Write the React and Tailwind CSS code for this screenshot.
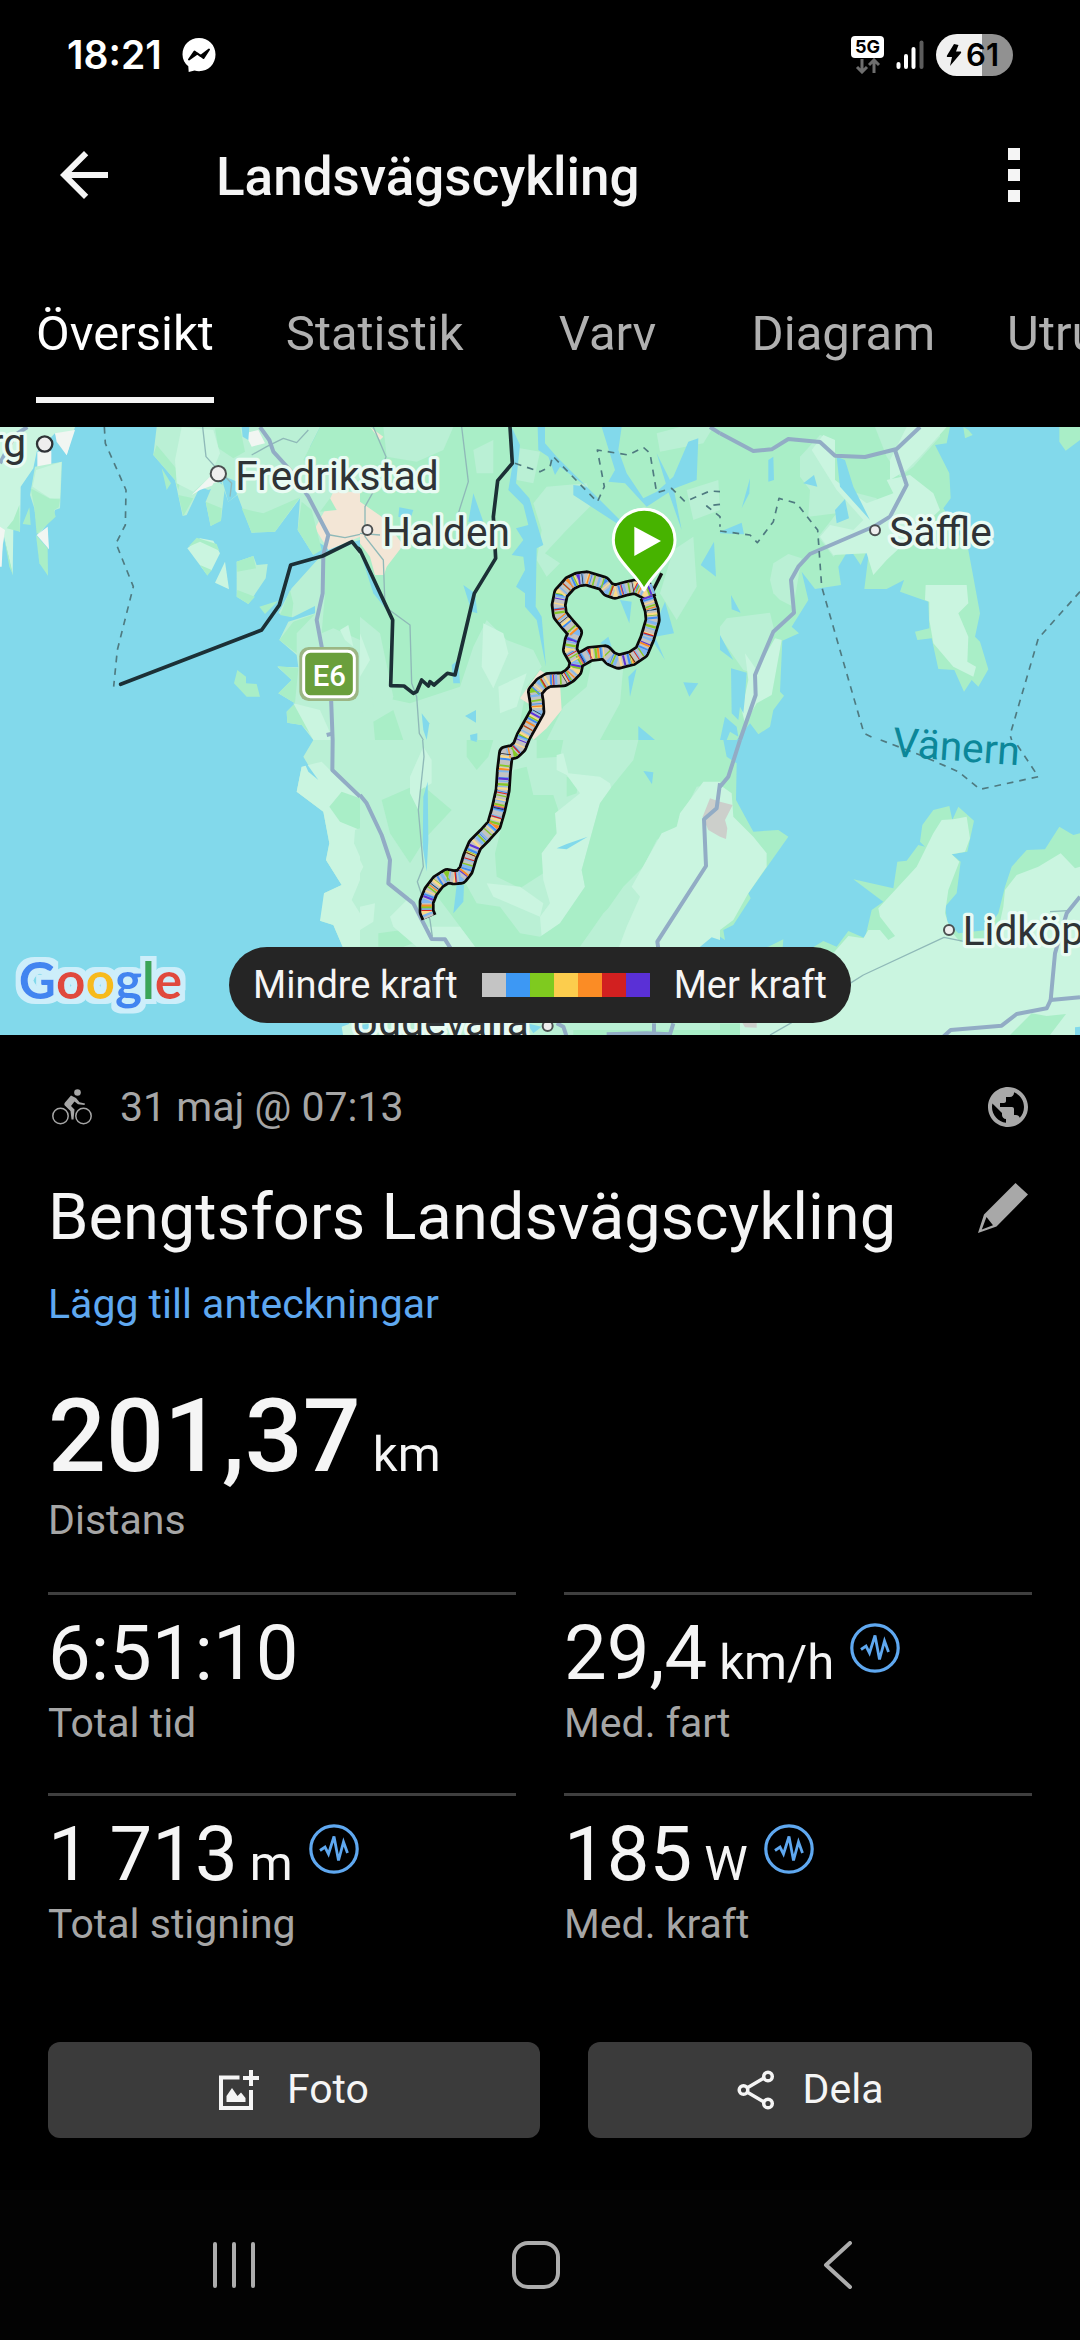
import { useState } from 'react';

const tabs = ['Översikt', 'Statistik', 'Varv', 'Diagram', 'Utrustning'];

const stats = [
  { value: '6:51:10', label: 'Total tid' },
  { value: '29,4', unit: 'km/h', label: 'Med. fart', graph: true },
  { value: '1 713', unit: 'm', label: 'Total stigning', graph: true },
  { value: '185', unit: 'W', label: 'Med. kraft', graph: true },
];

const WATER = '#82d9eb';
const FOREST = '#a9eec7';
const LAND = '#baf0d5';
const PLAIN = '#caf5e0';
const TOWN = '#f3e6d6';
const SAND = '#f1f6f2';
const GREY = '#cccfcb';

// Every tile is 1080 units wide, areas are painted in order
const tiles = [
  {
    id: 'nw',
    x: 0,
    y: -21,
    areas: [
      [PLAIN, '0,21 225,21 200,106 165,40 110,95 100,145 62,200 60,335 40,325 38,465 12,350 0,440'],
      [FOREST, '20,325 60,335 58,255 40,300'],
      [SAND, '165,40 225,30 200,106 170,65'],
      [SAND, '112,95 154,92 154,140 112,145'],
      [SAND, '0,320 15,330 8,375 5,440 0,440'],
      [LAND, '105,140 186,125 180,265 165,270 160,290 115,345 103,265 90,225'],
      [PLAIN, '108,150 184,126 180,235 150,235 98,200'],
      [FOREST, '92,205 150,236 180,238 176,262 162,270 167,290 110,343 103,262'],
      [FOREST, '68,312 88,262 92,315'],
      [FOREST, '108,345 143,385 144,467 118,430'],
      [FOREST, '12,350 40,467 28,440'],
      [SAND, '110,345 143,320 147,388'],
      [LAND, '470,21 960,21 930,80 945,130 1000,150 1080,120 1080,360 985,385 960,370 940,405 893,330 900,235 825,335 755,338 712,225 685,245 662,180 650,200 625,210 600,200 560,285 548,288 525,180 460,105'],
      [FOREST, '470,75 545,165 535,210 525,180 460,105'],
      [FOREST, '535,225 580,235 550,288'],
      [FOREST, '645,25 720,21 735,95 700,115 655,85'],
      [FOREST, '725,265 790,280 900,232 825,335 755,338'],
      [PLAIN, '545,21 640,30 660,100 630,170 580,215 530,190 525,120'],
      [SAND, '575,225 640,160 655,190 600,210'],
      [SAND, '735,40 775,30 795,70 755,80'],
      [LAND, '655,185 675,200 663,300 632,318 617,245 640,190'],
      [FOREST, '617,245 665,265 663,303 632,318'],
      [WATER, '662,165 712,185 710,225 685,245'],
      [FOREST, '485,145 513,190 500,210'],
      [WATER, '725,21 748,21 745,60 728,50'],
      [FOREST, '930,80 960,21 1080,21 1080,130 1000,160 910,120'],
      [TOWN, '1000,215 1080,215 1080,350 985,390 945,325 975,270'],
      [FOREST, '960,275 990,235 1010,270'],
      [FOREST, '905,245 935,270 965,390 940,405 893,330'],
      [PLAIN, '562,385 600,355 640,362 660,400 635,450 620,463'],
      [FOREST, '565,380 590,353 650,372 658,392 600,365'],
      [FOREST, '600,435 635,450 622,467'],
      [PLAIN, '675,425 687,508 645,488'],
      [LAND, '710,425 760,408 770,435 803,432 797,475 745,552 710,530'],
      [FOREST, '710,425 760,408 768,445 712,455'],
      [FOREST, '712,510 765,530 745,552 710,530'],
      [LAND, '1056,375 1080,400 1080,960 940,960 905,915 862,908 860,875 885,850 835,820 875,780 832,740 895,742 890,705 838,660 865,605 945,580 945,558 878,592 835,580 875,505 965,405'],
      [FOREST, '970,410 1056,372 1080,410 1080,660 1000,625 965,640 975,520'],
      [FOREST, '778,560 835,542 795,582'],
      [FOREST, '870,510 880,550 875,592 840,585'],
      [FOREST, '838,660 880,605 945,582 890,640 890,700'],
      [FOREST, '832,738 895,745 885,850 835,820 875,780'],
      [FOREST, '860,875 885,850 950,960 905,915 862,908'],
      [PLAIN, '880,850 960,870 1000,960 940,960'],
      [PLAIN, '1020,630 1045,615 1060,680 1035,660'],
      [FOREST, '712,750 738,770 738,790 770,792 780,830 740,830 702,790'],
    ],
    minor: ['608,21 618,110 650,145 695,190 690,230', '755,105 800,80 850,55 890,68 925,30', '990,345 1035,353 1080,343'],
    roads: ['0,130 45,45 82,21', '780,21 808,60 820,95 870,150 925,230 985,345 970,405 968,520 950,600 965,680 993,830 998,960', '980,945 1000,940'],
    dashed: ['313,21 316,70 378,210 376,315 348,370 400,500 352,690 341,800'],
    border: ['362,793 785,630 838,555 872,435 968,408 1056,365 1080,395'],
  },
  {
    id: 'n',
    x: 1080,
    y: -21,
    areas: [
      [FOREST, '0,21 1080,21 1080,960 0,960'],
      [LAND, '70,21 280,21 250,90 170,125 80,110'],
      [LAND, '455,80 540,95 520,190 470,180'],
      [LAND, '560,200 680,190 700,250 620,330 555,400 600,430 560,470 530,420 545,330 520,250'],
      [LAND, '890,40 960,21 1060,21 1030,70 900,95'],
      [LAND, '980,210 1075,180 1080,270 1000,300'],
      [LAND, '340,90 400,60 400,160 350,160'],
      [LAND, '0,590 60,640 100,830 60,960 0,960'],
      [LAND, '60,830 150,850 300,800 340,680 380,600 440,660 520,690 545,740 500,800 470,960 60,960'],
      [FOREST, '40,905 100,870 130,960 45,960'],
      [LAND, '610,860 680,800 700,700 790,740 780,850 720,960 560,960'],
      [PLAIN, '370,610 430,640 445,700 400,805 365,740'],
      [PLAIN, '0,640 30,720 0,770'],
      [PLAIN, '415,800 500,760 470,860 420,880'],
      [LAND, '940,390 1000,350 1010,500 950,600 900,520'],
      [TOWN, '0,245 65,290 130,375 80,440 72,465 45,465 30,410 0,370'],
      [TOWN, '480,835 540,750 600,790 605,870 560,925 520,960 500,910 520,860'],
      [TOWN, '30,21 70,50 60,60'],
      [WATER, '118,262 160,270 150,300 115,290'],
      [WATER, '340,220 370,305 325,305'],
      [WATER, '455,21 480,75 468,190 508,235 550,375 530,385 527,560 545,590 558,740 530,600 495,560 495,520 468,500 495,450 490,410 455,405 490,360 468,325 505,315 490,255 445,210 460,120'],
      [WATER, '533,21 555,21 555,70 590,110 720,240 780,300 770,310 640,225 640,195 680,200 600,140 585,165 565,110 535,90'],
      [WATER, '725,21 785,21 775,90 800,160 850,235 890,215 940,170 985,65 1015,55 1010,180 945,205 860,260 795,190 745,185 765,150'],
      [WATER, '890,100 940,200 965,330 925,215'],
      [WATER, '310,495 345,520 352,580 335,575'],
      [WATER, '275,735 295,720 300,790 280,790'],
      [WATER, '0,395 50,500 80,570 40,520'],
      [WATER, '780,540 815,545 808,610'],
      [WATER, '915,545 942,640 885,650 915,720 870,650'],
      [WATER, '1022,435 1062,365 1068,470'],
      [WATER, '970,787 1015,790 988,830'],
      [WATER, '720,670 745,650 755,680'],
      [WATER, '830,745 810,830 805,770'],
      [WATER, '185,880 208,910 200,960 190,930'],
      [WATER, '315,888 348,870 348,908'],
      [WATER, '330,945 352,940 352,960 332,960'],
      [WATER, '835,918 885,960 835,960'],
      [LAND, '0,810 30,790 40,860 0,880'],
    ],
    minor: ['40,21 78,110 40,215 15,260 15,350 70,420 75,560 150,615 155,790 170,830 178,940 190,960', '305,21 325,185 295,280', '0,340 60,345'],
    roads: ['1050,21 1080,40'],
    dashed: ['465,130 540,155 570,140 578,108 712,246 733,200 712,90 805,105 850,82 870,100 890,218 935,205 975,245 1050,213 1080,215', '1080,253 1040,258 1080,290 1080,320'],
    border: ['-5,385 0,390 98,600 92,797 132,798 160,820 170,815 185,780 205,798 210,785 222,795 262,760 285,765 343,520 407,415 400,290 413,182 457,130 450,21'],
  },
  {
    id: 'ne',
    x: 2160,
    y: -21,
    areas: [
      [WATER, '0,21 1080,21 1080,960 0,960'],
      [FOREST, '0,21 690,21 680,70 645,75 688,160 692,235 670,265 745,390 780,580 765,650 780,665 805,748 775,800 755,780 732,815 703,750 655,747 635,655 592,660 585,635 628,625 625,545 540,515 552,480 500,507 433,507 450,370 422,435 388,385 355,440 363,495 285,507 245,455 265,540 215,620 237,640 187,662 180,815 192,827 160,870 150,920 115,943 90,910 50,960 0,960'],
      [FOREST, '1018,21 1080,21 1080,60 1037,92 1018,65'],
      [FOREST, '730,21 745,30 758,45 735,55'],
      [LAND, '240,110 300,45 345,60 345,180 375,210 470,235 470,300 340,410 295,350 350,280 265,290 270,210 240,170'],
      [PLAIN, '275,90 310,45 345,60 345,180 440,250 520,220 500,180 570,165 640,220 660,270 500,420 460,465 440,400 340,405 300,350 330,315 400,330 430,300 350,210'],
      [LAND, '465,21 660,21 660,50 580,140 540,170 500,110'],
      [PLAIN, '560,21 680,21 600,110 560,150 510,180 510,120'],
      [LAND, '150,480 160,430 205,402 245,415 220,560 180,540 160,520'],
      [LAND, '0,620 20,595 150,578 165,640 100,760 70,750 0,650'],
      [PLAIN, '75,700 110,750 165,655 185,660 155,825 110,850 75,910 65,870 85,780'],
      [PLAIN, '617,495 740,495 745,550 715,580 745,650 742,725 768,740 760,770 700,740 640,670 628,600 628,545 615,540'],
      [WATER, '145,120 160,110 162,180 145,185'],
      [WATER, '90,175 88,220 65,265'],
      [WATER, '250,190 282,165 292,200'],
      [WATER, '350,110 375,120 400,200 450,300 360,200'],
      [WATER, '345,270 375,237 387,295 350,310'],
      [WATER, '0,335 65,308 72,343 0,340'],
      [WATER, '33,525 62,578 35,568'],
      [WATER, '33,745 80,758 75,830 70,880 60,860 55,900 35,880'],
      [WATER, '0,645 40,720 0,690'],
      [WATER, '15,890 50,920 55,950 30,935 20,960 0,960'],
    ],
    minor: [],
    roads: ['0,40 100,93 155,88 205,57 300,66 345,107 435,111 530,87 600,21', '525,90 560,195 510,290 465,318 270,402 235,440 213,480 222,578 160,635 105,765 107,825 60,960'],
    dashed: ['0,333 90,345 112,368 160,305 177,235 230,250 293,330 305,500 432,940 470,958', '1080,515 955,655 870,945 875,960'],
    border: [],
  },
  {
    id: 'sw',
    x: 0,
    y: 939,
    areas: [
      [LAND, '940,0 1080,0 1080,900 1100,900 1050,885 1028,620 1000,555 960,542 970,520 972,460 1025,435 978,360 988,310 970,215 890,155 905,80 950,118 910,50'],
      [PLAIN, '905,80 965,65 1010,110 1080,170 1080,620 1028,620 1000,555 960,542 972,460 1025,435 978,360 988,310 970,215 890,155'],
      [FOREST, '1025,155 1080,175 1080,270 1020,245 988,200'],
      [LAND, '1065,270 1080,265 1080,350 1062,310'],
      [LAND, '1055,480 1080,420 1080,520'],
      [WATER, '905,50 955,120 925,95'],
      [PLAIN, '1025,860 1080,840 1080,890 1030,890'],
    ],
    minor: [],
    roads: ['998,0 997,90 1080,170'],
    dashed: [],
    border: [],
  },
  {
    id: 's',
    x: 1080,
    y: 939,
    areas: [
      [LAND, '0,0 1080,0 1080,900 0,900'],
      [FOREST, '320,0 400,0 385,50 350,90 320,50'],
      [FOREST, '530,0 610,0 600,50 530,55'],
      [FOREST, '460,90 500,80 520,165 580,165 615,270 550,340 550,400 480,445 410,410 405,340 440,200'],
      [FOREST, '620,110 655,120 650,160 620,170'],
      [FOREST, '65,180 180,130 275,210 200,290 150,370 90,280'],
      [FOREST, '55,580 165,565 160,610 130,620 55,620'],
      [PLAIN, '150,110 190,20 215,60 215,130 180,150 175,210 150,160'],
      [PLAIN, '590,45 610,40 625,100 720,110 750,130 755,150 720,190 665,390 675,440 600,550 545,590 540,530 570,490 550,420 545,340 590,280 585,220 660,160 620,105 590,90'],
      [PLAIN, '380,430 480,440 550,490 540,530 400,470'],
      [FOREST, '835,0 1080,0 1080,130 1010,140 950,260 890,300 850,380 790,440 720,540 660,620 345,620 270,520 210,440 300,400 350,490 420,500 480,580 540,590 600,550 675,440 665,390 720,190 755,140 820,60'],
      [LAND, '810,440 840,465 790,550 765,630 660,620 730,520'],
      [PLAIN, '1080,125 1030,125 960,220 950,260 905,280 860,360 815,440 840,470 800,560 770,640 900,640 1080,640'],
      [PLAIN, '0,360 10,380 0,400'],
      [PLAIN, '100,560 90,530 150,470 190,560 300,560 345,620 170,620'],
      [PLAIN, '0,500 45,490 40,545 0,570'],
      [GREY, '1050,175 1080,185 1080,290 1045,270 1028,230'],
      [WATER, '203,125 205,300 200,395 188,320 190,170'],
      [WATER, '290,435 312,435 310,485 280,520'],
      [WATER, '590,325 620,312 683,290 620,328'],
      [WATER, '850,93 880,97 876,133'],
      [WATER, '1015,625 1055,592 1080,600 1080,625'],
      [WATER, '330,0 350,0 350,6'],
      [FOREST, '640,870 1080,870 1080,900 640,900'],
      [WATER, '0,855 40,850 30,885 10,885'],
      [WATER, '500,850 545,860 520,880'],
    ],
    minor: ['188,0 192,50 175,210 190,380 172,425 210,540 217,590'],
    roads: ['0,165 20,190 65,285 90,360 85,430 160,490 215,597 255,598 275,630', '1080,130 1070,205 1032,238 1038,378 892,605 897,640', '590,850 610,860 620,890', '740,883 860,880 930,883 940,850', '882,850 882,885'],
    dashed: [],
    border: [],
  },
  {
    id: 'se',
    x: 2160,
    y: 939,
    areas: [
      [WATER, '0,0 1080,0 1080,900 0,900'],
      [FOREST, '0,0 10,0 20,50 50,70 48,180 100,275 175,270 205,290 85,460 92,475 40,555 10,570 15,600 0,590'],
      [PLAIN, '0,135 35,160 40,230 100,290 140,340 140,380 85,460 40,540 0,570'],
      [GREY, '0,185 38,195 15,240 22,265 18,297 0,290'],
      [FOREST, '0,640 145,620 190,598 188,625 250,640 310,603 350,620 385,573 435,595 455,510 490,485 400,418 520,445 532,365 560,362 595,315 615,320 600,305 607,255 640,210 688,198 697,240 715,200 762,242 742,335 695,343 722,365 710,460 675,500 682,545 715,580 800,570 835,520 855,440 875,380 920,330 975,328 1018,260 1060,285 1080,280 1080,900 0,900'],
      [PLAIN, '0,660 330,650 385,588 430,595 445,570 480,570 505,600 525,588 480,530 475,505 590,380 640,280 665,240 700,238 740,230 750,295 735,335 695,343 718,365 685,450 675,520 690,570 720,605 830,590 850,500 855,450 890,405 955,380 1022,340 1065,385 1080,380 1080,900 0,900'],
      [FOREST, '870,885 935,820 980,828 1038,822 990,885'],
      [FOREST, '0,850 60,850 60,900 0,900'],
      [GREY, '65,845 110,845 110,863 75,862'],
      [WATER, '1065,862 1080,860 1080,885 1065,885'],
    ],
    minor: ['390,730 430,705 672,592 735,605', '150,885 215,848', '990,515 1045,512'],
    roads: ['60,0 25,110 0,140', '1080,470 1040,520 1005,640 992,780 1080,772', '992,780 980,805 890,822 845,857 692,870 670,890'],
    dashed: ['482,0 600,45 715,95 780,148 955,110 885,5'],
    border: [],
  },
];

const route =
  'M880 505L855 515L825 500L800 505L765 515L745 508L730 490L680 475L655 478L630 490L603 520L596 555L600 585L622 612L645 638L635 662L630 690L650 725L690 702L735 697L752 715L775 725L815 715L845 695L862 655L878 600L875 570L862 530M650 725L645 750L630 766L610 778L565 780L545 792L525 815L530 845L532 875L490 950L478 980L462 995L438 1000L432 1050L428 1110L415 1170L402 1215L375 1245L345 1275L330 1310L318 1350L302 1370L282 1372L262 1368L235 1385L212 1415L200 1445L200 1475L207 1492';

const routeColors = [
  { color: '#7fb7ef', dash: '7 25 4 13 9 31' },
  { color: '#3f8df2', dash: '0 11 5 37 3 49 6 41' },
  { color: '#86c928', dash: '0 13 7 29 4 23 5 37' },
  { color: '#fbd98a', dash: '0 22 7 29 4 33' },
  { color: '#f98c28', dash: '0 41 4 53 6 67' },
  { color: '#d32323', dash: '0 57 3 71 4 93' },
  { color: '#5c33d8', dash: '0 9 6 83 3 129' },
  { color: '#222', dash: '0 66 2 97' },
];

const legend = ['bg-[#c4c4c4]', 'bg-[#3d98f4]', 'bg-[#7fca1f]', 'bg-[#fccd4d]', 'bg-[#fb8c25]', 'bg-[#d22020]', 'bg-[#5a30d6]'];

const cities = [
  { name: 'Fredrikstad', x: 706, y: 188, cx: 655, cy: 140, r: 23 },
  { name: 'Halden', x: 1146, y: 356, cx: 1102, cy: 309, r: 15 },
  { name: 'Säffle', x: 2668, y: 358, cx: 2625, cy: 310, r: 15 },
  { name: 'Lidköping', x: 2888, y: 1555, cx: 2847, cy: 1509, r: 15 },
  { name: 'Uddevalla', x: 1056, y: 1826, cx: 1643, cy: 1797, r: 15 },
];

function Lines({ lines, ...props }) {
  return lines.map((points) => <polyline key={points} points={points} fill="none" strokeLinejoin="round" {...props} />);
}

function RouteMap() {
  return (
    <svg viewBox="0 0 3240 1824" className="block w-full" role="img" aria-label="Karta">
      <defs>
        <filter id="halo" x="-20%" y="-20%" width="140%" height="140%">
          <feMorphology in="SourceAlpha" operator="dilate" radius="15" result="grown" />
          <feFlood floodColor="#cdeefa" />
          <feComposite in2="grown" operator="in" result="edge" />
          <feMerge>
            <feMergeNode in="edge" />
            <feMergeNode in="SourceGraphic" />
          </feMerge>
        </filter>
      </defs>
      <rect width="3240" height="1824" fill={WATER} />
      {tiles.map((tile) => (
        <g key={tile.id} transform={`translate(${tile.x} ${tile.y})`}>
          {tile.areas.map(([fill, points], i) => (
            <polygon key={i} points={points} fill={fill} />
          ))}
          <Lines lines={tile.minor} stroke="#8fb9b8" strokeWidth="4" />
        </g>
      ))}
      {tiles.map((tile) => (
        <g key={tile.id} transform={`translate(${tile.x} ${tile.y})`}>
          <Lines lines={tile.roads} stroke="#92acc5" strokeWidth="12" />
          <Lines lines={tile.dashed} stroke="#4f7a80" strokeWidth="5" strokeDasharray="20 18" />
          <Lines lines={tile.border} stroke="#1c3036" strokeWidth="11" strokeLinecap="round" />
        </g>
      ))}

      {/* City names */}
      <g fontFamily="Roboto, sans-serif" fontSize="122" fill="#2f3336">
        <g stroke="#e9fbf3" strokeWidth="20" strokeLinejoin="round" paintOrder="stroke">
          <text x="78" y="90" textAnchor="end">Tønsberg</text>
          {cities.map((city) => (
            <text key={city.name} x={city.x} y={city.y}>{city.name}</text>
          ))}
        </g>
        <text x="2676" y="988" fill="#0c8799" transform="rotate(4 2676 988)">Vänern</text>
        <circle cx="134" cy="51" r="23" fill="#eee" stroke="#2f3336" strokeWidth="7" />
        {cities.map((city) => (
          <circle key={city.name} cx={city.cx} cy={city.cy} r={city.r} fill="#eee" stroke="#4b4f50" strokeWidth="6" />
        ))}
      </g>

      {/* Road shield */}
      <rect x="898" y="660" width="178" height="162" rx="28" fill="#9bb684" />
      <rect x="911" y="673" width="152" height="136" rx="20" fill="#6a9f3c" stroke="#fff" strokeWidth="9" />
      <text x="988" y="777" textAnchor="middle" fontFamily="Roboto, sans-serif" fontWeight="500" fontSize="88" fill="#fff">E6</text>

      {/* Ridden route */}
      <g transform="translate(1080 -21)" fill="none" strokeLinejoin="round">
        <path d="M870 530L905 460" stroke="#111" strokeWidth="10" />
        <path d={route} stroke="#0b0b0b" strokeWidth="48" />
        <path d={route} stroke="#c3c3c3" strokeWidth="31" />
        {routeColors.map(({ color, dash }) => (
          <path key={color} d={route} stroke={color} strokeWidth="31" strokeDasharray={dash} />
        ))}
        <path d="M852 510C825 455 760 420 760 360A92 92 0 0 1 945 360C945 420 880 455 852 510Z" fill="#47b300" stroke="#fff" strokeWidth="9" />
        <path d="M823 320V408L903 363Z" fill="#fff" />
      </g>

      {/* Map provider */}
      <text x="56" y="1716" fontFamily="Lato, sans-serif" fontWeight="700" fontSize="154" filter="url(#halo)">
        <tspan fill="#4385f0">G</tspan>
        <tspan fill="#e0493c">o</tspan>
        <tspan fill="#f6bb1c">o</tspan>
        <tspan fill="#4385f0">g</tspan>
        <tspan fill="#3ba658">l</tspan>
        <tspan fill="#e0493c">e</tspan>
      </text>
    </svg>
  );
}

function MessengerIcon() {
  return (
    <svg viewBox="0 0 34 34" className="size-[34px]">
      <path d="M17 0C7.500 0 .5 7 .5 16.500C.5 21.500 2.800 25.500 6.300 28.300L6.700 34L12.500 32.600C14 33 15.500 33.200 17 33.200C26.500 33.200 33.500 26 33.500 16.500C33.500 7 26.500 0 17 0Z" fill="#fff" />
      <path d="M7 21.500L12.500 13.500L18.500 18L27 11.500L21.500 20L15.500 15.500Z" fill="#000" stroke="#000" strokeWidth="2" strokeLinejoin="round" />
    </svg>
  );
}

function BikeIcon() {
  return (
    <svg viewBox="0 0 40 36" className="h-9 w-10 text-[#a6a6a6]" fill="none" stroke="currentColor">
      <circle cx="8.500" cy="27" r="7.700" strokeWidth="1.500" />
      <circle cx="31.500" cy="27" r="7.700" strokeWidth="1.500" />
      <circle cx="25.500" cy="3.500" r="3.300" fill="currentColor" stroke="none" />
      <path d="M19 6.500L24 9L27.500 13.300L33 14.500L32.500 16L26 15.300L22.500 12.500L19 17L22.500 20.500L21.500 30.500H19.500L18.500 22L12.800 16.500C12 15.500 12.300 14.500 13 13.500Z" fill="currentColor" stroke="none" />
    </svg>
  );
}

function GlobeIcon() {
  return (
    <svg viewBox="0 0 24 24" className="size-12" fill="#a8a8a8">
      <path d="M12 2C6.480 2 2 6.480 2 12s4.480 10 10 10 10-4.480 10-10S17.520 2 12 2zm-1 17.930c-3.950-.49-7-3.850-7-7.930 0-.62.080-1.210.21-1.790L9 15v1c0 1.100.9 2 2 2v1.930zm6.900-2.540c-.26-.81-1-1.390-1.900-1.390h-1v-3c0-.55-.45-1-1-1H8v-2h2c.55 0 1-.45 1-1V7h2c1.100 0 2-.9 2-2v-.41c2.930 1.190 5 4.060 5 7.410 0 2.080-.8 3.970-2.100 5.390z" />
    </svg>
  );
}

function PencilIcon() {
  return (
    <svg viewBox="0 0 50 50" className="size-[50px]" fill="#a8a8a8">
      <path fillRule="evenodd" d="M37.500 0L50 11.500L18.500 43.500L0 50L6 31.500ZM8.500 34L3.800 46.500L15 42.200Z" />
    </svg>
  );
}

function GraphIcon() {
  return (
    <svg viewBox="0 0 50 50" className="size-[50px]" fill="none" stroke="#5fa8f0">
      <circle cx="25" cy="25" r="23.200" strokeWidth="3.200" />
      <path d="M11 26.500L16 23L19.500 30L25 12.500L29.500 36.500L34.500 18L38.500 29" strokeWidth="2.800" />
    </svg>
  );
}

function AddPhotoIcon() {
  return (
    <svg viewBox="0 0 40 40" className="size-10" fill="none" stroke="#f5f5f5">
      <path d="M20.500 7.500H2V38H32V20" strokeWidth="4" />
      <path d="M32 0V16M24 8H40" strokeWidth="4" />
      <path d="M7.500 32V26L13 18L18.500 26L22 22.500L26.500 28V32Z" fill="#f5f5f5" stroke="none" />
    </svg>
  );
}

function ShareIcon() {
  return (
    <svg viewBox="0 0 38 40" className="h-10 w-[38px]" fill="none" stroke="#f5f5f5" strokeWidth="3.500">
      <path d="M10 18L27 8M10 22L27 32" />
      <circle cx="6.500" cy="20" r="4.300" />
      <circle cx="31" cy="6.500" r="4.300" />
      <circle cx="31" cy="33.500" r="4.300" />
    </svg>
  );
}

function StatusBar() {
  return (
    <div className="flex h-[110px] items-center justify-between px-[67px] font-[Inter,sans-serif]">
      <div className="flex items-center gap-5">
        <span className="text-[39px] font-semibold leading-[48px] text-white">18:21</span>
        <MessengerIcon />
      </div>
      <div className="flex items-center gap-3">
        <div className="flex flex-col items-center">
          <span className="rounded bg-white px-1 text-[18px] font-bold leading-[22px] text-black">5G</span>
          <svg viewBox="0 0 26 16" className="h-4 w-[26px]" fill="none" stroke="#6e6e6e" strokeWidth="3">
            <path d="M7 1V14M2 9L7 14L12 9M19 15V2M14 7L19 2L24 7" />
          </svg>
        </div>
        <svg viewBox="0 0 28 30" className="h-[30px] w-7" strokeWidth="4" strokeLinecap="round">
          <path d="M2.500 24V27M10 16V27M17.500 9V27" stroke="#fff" />
          <path d="M25.500 2.500V27" stroke="#5c5c5c" />
        </svg>
        <div className="flex h-[42px] items-center gap-1 rounded-full bg-linear-to-r from-[#f0f0f0] from-60% to-[#919191] to-60% pl-[10px] pr-[14px] text-black">
          <svg viewBox="0 0 16 22" className="h-[22px] w-4">
            <path d="M8 0L1 11.500C.5 12.500 1 13 2 13H6L4 22L15 9C15.500 8 15 7.500 14.500 7.500H10L12.500 1Z" />
          </svg>
          <span className="text-[31px] font-semibold leading-[42px]">61</span>
        </div>
      </div>
    </div>
  );
}

function Stat({ value, unit, label, graph }) {
  return (
    <div className="border-t-[3px] border-[#3f3f3f] pb-[46px] pt-3">
      <div className="flex items-baseline gap-4">
        <div className="text-[76px] leading-[92px]">
          {value}
          {unit && <span className="text-[49px] leading-12"> {unit}</span>}
        </div>
        {graph && (
          <button aria-label={`Diagram ${label}`} className="mt-4 self-start">
            <GraphIcon />
          </button>
        )}
      </div>
      <div className="text-[41px] leading-12 text-[#a6a6a6]">{label}</div>
    </div>
  );
}

function App() {
  const [activeTab, setActiveTab] = useState('Översikt');

  return (
    <div className="flex min-h-screen flex-col overflow-hidden bg-black font-[Roboto,sans-serif] text-[#f5f5f5]">
      <StatusBar />

      {/* Header */}
      <header className="flex h-[130px] items-center pl-12 pr-[30px]">
        <button aria-label="Tillbaka">
          <svg viewBox="0 0 24 24" className="size-[72px]" fill="#f5f5f5">
            <path d="M20 11H7.830l5.590-5.590L12 4l-8 8 8 8 1.410-1.410L7.830 13H20v-2z" />
          </svg>
        </button>
        <h1 className="ml-24 mt-1 flex-1 text-[53px] font-medium leading-[64px]">Landsvägscykling</h1>
        <button aria-label="Fler alternativ" className="flex w-[72px] flex-col items-center gap-[9px]">
          <span className="size-3 bg-[#f5f5f5]" />
          <span className="size-3 bg-[#f5f5f5]" />
          <span className="size-3 bg-[#f5f5f5]" />
        </button>
      </header>

      {/* Tabs */}
      <nav className="flex overflow-hidden pb-6">
        {tabs.map((tab) => (
          <button
            key={tab}
            onClick={() => setActiveTab(tab)}
            className="min-w-[216px] shrink-0 px-9 pt-[66px] text-[49px] leading-14"
          >
            <span
              className={
                tab === activeTab
                  ? 'block border-b-6 border-[#f5f5f5] pb-[35px] text-white'
                  : 'block border-b-6 border-transparent pb-[35px] text-[#b0b0b0]'
              }
            >
              {tab}
            </span>
          </button>
        ))}
      </nav>

      {/* Map */}
      <div className="relative">
        <RouteMap />
        <div className="absolute bottom-3 left-1/2 flex h-[76px] -translate-x-1/2 items-center gap-6 whitespace-nowrap rounded-full bg-[#252525] px-6 text-[38px]">
          <span>Mindre kraft</span>
          <div className="flex">
            {legend.map((color) => (
              <span key={color} className={`size-6 ${color}`} />
            ))}
          </div>
          <span>Mer kraft</span>
        </div>
      </div>

      {/* Activity */}
      <main className="px-12 pt-12">
        <div className="flex h-12 items-center justify-between">
          <div className="flex items-center gap-7 pl-1">
            <BikeIcon />
            <span className="text-[41px] leading-12 text-[#a6a6a6]">31 maj @ 07:13</span>
          </div>
          <GlobeIcon />
        </div>
        <div className="mt-12 flex items-start justify-between">
          <h2 className="text-[65px] leading-[77px]">Bengtsfors Landsvägscykling</h2>
          <button aria-label="Redigera" className="mr-1 mt-1">
            <PencilIcon />
          </button>
        </div>
        <a href="#anteckningar" className="mt-6 block text-[41px] leading-12 text-[#5fa8f0]">
          Lägg till anteckningar
        </a>

        <div className="mt-12">
          <div className="text-[102px] font-medium leading-[120px]">
            201,37
            <span className="text-[49px] font-normal leading-12"> km</span>
          </div>
          <div className="text-[41px] leading-12 text-[#a6a6a6]">Distans</div>
        </div>

        <div className="mt-12 grid grid-cols-2 gap-x-12">
          {stats.map((stat) => (
            <Stat key={stat.label} {...stat} />
          ))}
        </div>

        <div className="mt-12 flex gap-12">
          <button className="flex h-24 flex-41 items-center justify-center gap-7 rounded-xl bg-[#3b3b3b] text-[41px]">
            <AddPhotoIcon />
            Foto
          </button>
          <button className="flex h-24 flex-37 items-center justify-center gap-7 rounded-xl bg-[#3b3b3b] text-[41px]">
            <ShareIcon />
            Dela
          </button>
        </div>
      </main>

      {/* System navigation */}
      <div className="mt-auto grid h-[150px] grid-cols-3 items-center justify-items-center bg-[#030303] pl-[83px] pr-[91px]">
        <button aria-label="Senaste appar">
          <svg viewBox="0 0 44 48" className="h-12 w-11" stroke="#adadad" strokeWidth="4" strokeLinecap="round">
            <path d="M3 3V45M22 3V45M41 3V45" />
          </svg>
        </button>
        <button aria-label="Hem">
          <svg viewBox="0 0 48 48" className="size-12" fill="none" stroke="#adadad" strokeWidth="4">
            <rect x="2" y="2" width="44" height="44" rx="14" />
          </svg>
        </button>
        <button aria-label="Bakåt">
          <svg viewBox="0 0 30 48" className="h-12 w-[30px]" fill="none" stroke="#adadad" strokeWidth="4" strokeLinecap="round" strokeLinejoin="round">
            <path d="M27 2L3 24L27 46" />
          </svg>
        </button>
      </div>
    </div>
  );
}

export default App;
